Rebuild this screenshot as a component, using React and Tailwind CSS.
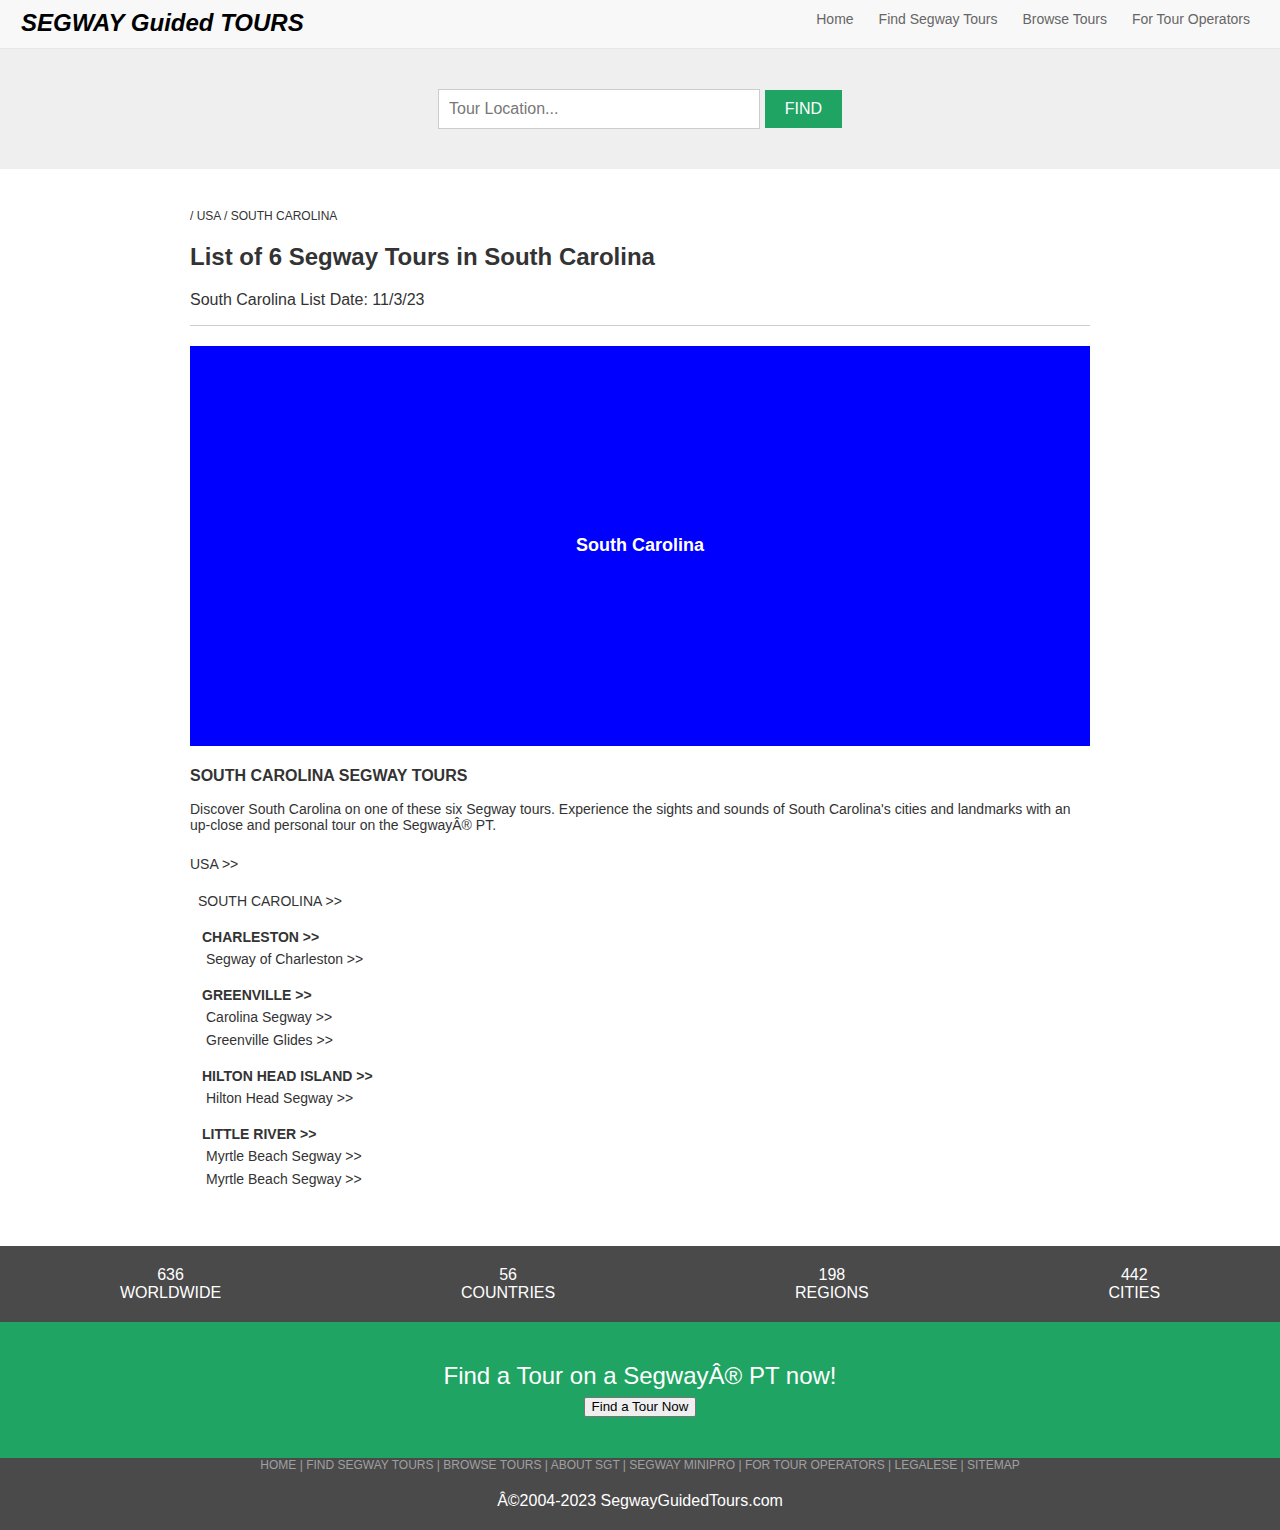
// App.jsx

const navLinks = ["Home", "Find Segway Tours", "Browse Tours", "For Tour Operators"];

const stats = [
  { num: "636", label: "WORLDWIDE" },
  { num: "56", label: "COUNTRIES" },
  { num: "198", label: "REGIONS" },
  { num: "442", label: "CITIES" },
];

const cities = [
  { name: "CHARLESTON >>", tours: ["Segway of Charleston >>"] },
  { name: "GREENVILLE >>", tours: ["Carolina Segway >>", "Greenville Glides >>"] },
  { name: "HILTON HEAD ISLAND >>", tours: ["Hilton Head Segway >>"] },
  { name: "LITTLE RIVER >>", tours: ["Myrtle Beach Segway >>", "Myrtle Beach Segway >>"] },
];

const footerLinks = [
  "HOME",
  "FIND SEGWAY TOURS",
  "BROWSE TOURS",
  "ABOUT SGT",
  "SEGWAY MINIPRO",
  "FOR TOUR OPERATORS",
  "LEGALESE",
  "SITEMAP",
];

const App = () => {
  return (
    <div className="min-h-[1530px] bg-white text-[#333] font-['Liberation_Sans',Arial,sans-serif]">
      {/* ================= HEADER ================= */}
      <header className="h-[49px] bg-[#f8f8f8] border-b border-[#e7e7e7] flex items-center justify-between pl-[21px] pr-[30px]">
        <a className="text-[24px] font-bold italic text-black leading-none -mt-[2px]">
          SEGWAY Guided TOURS
        </a>
        <nav className="flex gap-[25px] text-[14px] text-[#666] -mt-[10px]">
          {navLinks.map((l) => (
            <a key={l}>{l}</a>
          ))}
        </nav>
      </header>

      {/* ================= SEARCH ================= */}
      <section className="h-[120px] bg-[#efefef] flex items-center justify-center gap-[5px]">
        <input
          placeholder="Tour Location..."
          className="w-[322px] h-[40px] bg-white border border-[#ccc] px-[10px] text-[16px] placeholder:text-[#777] outline-none"
        />
        <button className="w-[77px] h-[38px] bg-[#1fa463] text-white text-[16px]">
          FIND
        </button>
      </section>

      {/* ================= CONTENT ================= */}
      <main className="w-[900px] mx-auto pt-[40px] pb-[58px]">
        <p className="text-[12px] leading-[15px]">/ USA / SOUTH CAROLINA</p>

        <h1 className="text-[24px] font-bold leading-[28px] mt-[19px]">
          List of 6 Segway Tours in South Carolina
        </h1>
        <p className="text-[16px] leading-[20px] mt-[19px]">
          South Carolina List Date: 11/3/23
        </p>
        <hr className="border-t border-[#ccc] mt-[15px]" />

        <div className="h-[400px] bg-[#0000ff] mt-[20px] flex items-center justify-center">
          <span className="text-white font-bold text-[18px] -mt-[2px]">South Carolina</span>
        </div>

        <h2 className="text-[16px] font-bold leading-[20px] mt-[20px]">
          SOUTH CAROLINA SEGWAY TOURS
        </h2>
        <p className="text-[14px] leading-[16px] mt-[15px]">
          Discover South Carolina on one of these six Segway tours. Experience the sights and sounds of South Carolina's cities and landmarks with an up-close and personal tour on the SegwayÂ® PT.
        </p>

        <p className="text-[14px] leading-[18px] mt-[22px]">USA &gt;&gt;</p>
        <p className="text-[14px] leading-[18px] mt-[19px] pl-[8px]">SOUTH CAROLINA &gt;&gt;</p>

        <div className="pl-[12px] mt-[18px] flex flex-col gap-[18px]">
          {cities.map((c) => (
            <div key={c.name}>
              <p className="text-[14px] font-bold leading-[18px]">{c.name}</p>
              <div className="pl-[4px] mt-[4px] flex flex-col gap-[5px]">
                {c.tours.map((t, i) => (
                  <p key={i} className="text-[14px] leading-[18px]">
                    {t}
                  </p>
                ))}
              </div>
            </div>
          ))}
        </div>
      </main>

      {/* ================= STATS ================= */}
      <section className="h-[76px] bg-[#4a4a4a] flex items-center justify-around text-white text-[16px] leading-[18px] text-center">
        {stats.map((s) => (
          <div key={s.label}>
            <div>{s.num}</div>
            <div>{s.label}</div>
          </div>
        ))}
      </section>

      {/* ================= CTA ================= */}
      <section className="h-[136px] bg-[#1fa463] flex flex-col items-center pt-[40px]">
        <p className="text-white text-[24px] leading-[28px]">Find a Tour on a SegwayÂ® PT now!</p>
        <button className="mt-[7px] px-[7px] h-[20px] text-[13.33px] leading-none text-black bg-[#efefef] border border-[#767676] rounded-[2px]">
          Find a Tour Now
        </button>
      </section>

      {/* ================= FOOTER ================= */}
      <footer className="h-[72px] bg-[#4a4a4a] flex flex-col items-center">
        <p className="text-[12px] leading-[14px] text-[#a0a0a0]">
          {footerLinks.join(" | ")}
        </p>
        <p className="text-white text-[16px] leading-[18px] mt-[20px]">
          Â©2004-2023 SegwayGuidedTours.com
        </p>
      </footer>
    </div>
  );
};

export default App;
